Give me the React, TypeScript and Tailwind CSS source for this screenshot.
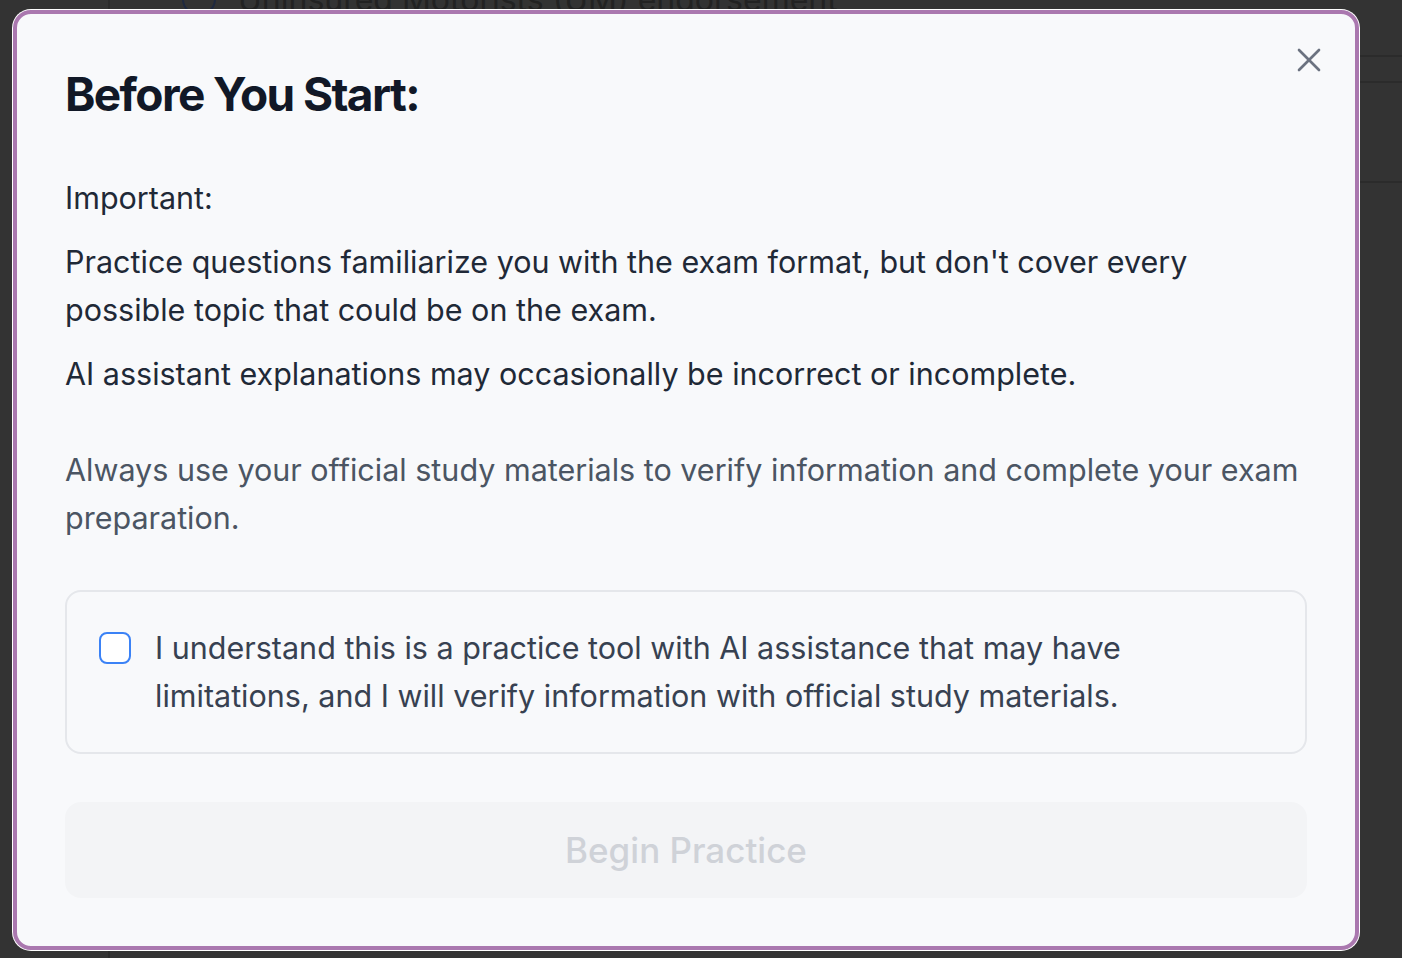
import { X } from 'lucide-react';

function BackgroundPage() {
  return (
    <div className="flex h-full w-full bg-[#333333]">
      <div className="w-[110px] shrink-0 border-r-2 border-[#2b2b2b]" />
      <div className="flex flex-1 flex-col">
        <div className="-mt-[24px] flex h-[81px] items-start border-b-2 border-[#2b2b2b] pl-[72px]">
          <div className="mt-[6px] h-[34px] w-[34px] rounded-full border-2 border-[#1f2940]" />
          <span className="ml-[22px] text-[32px] leading-[48px] text-[#222222]">
            Uninsured Motorists (UM) endorsement
          </span>
        </div>
        <div className="h-[26px] border-b-2 border-[#2b2b2b]" />
        <div className="h-[100px] border-b-2 border-[#2b2b2b]" />
        <div className="flex-1" />
      </div>
    </div>
  );
}

function AcknowledgeBox() {
  return (
    <label className="flex items-start gap-6 rounded-2xl border-2 border-[#e5e7eb] p-8">
      <span className="mt-2 h-8 w-8 shrink-0 rounded-lg border-2 border-[#3b82f6] bg-white" />
      <span className="text-[30.5px] leading-[48px] text-[#374151]">
        I understand this is a practice tool with AI assistance that may have limitations, and I will verify
        information with official study materials.
      </span>
    </label>
  );
}

export default function App() {
  return (
    <div
      className="relative h-[958px] w-full overflow-hidden"
      style={{ fontFamily: 'Inter, "Noto Sans", sans-serif' }}
    >
      <BackgroundPage />

      <div className="absolute left-[13px] top-[10px] w-[1346px] rounded-[18px] border-4 border-[#aa78af] bg-[#f8f9fb] p-12 ring-1 ring-white">
        <button className="absolute right-[26px] top-[26px] text-[#6b7280]">
          <X size={40} strokeWidth={1.6} />
        </button>

        <h2 className="text-[46px] font-bold leading-[64px] tracking-[-0.035em] text-[#111827]">
          Before You Start:
        </h2>

        <div className="mt-12 flex flex-col gap-4 text-[30.5px] leading-[48px] text-[#1f2937]">
          <p>Important:</p>
          <p>
            Practice questions familiarize you with the exam format, but don't cover every possible topic that
            could be on the exam.
          </p>
          <p>AI assistant explanations may occasionally be incorrect or incomplete.</p>
        </div>

        <p className="mt-12 text-[30.5px] leading-[48px] text-[#4b5563]">
          Always use your official study materials to verify information and complete your exam preparation.
        </p>

        <div className="mt-12">
          <AcknowledgeBox />
        </div>

        <button
          disabled
          className="mt-12 flex h-24 w-full items-center justify-center rounded-2xl bg-[#f3f4f6] text-[35px] font-medium text-[#cfd2d8]"
        >
          Begin Practice
        </button>
      </div>
    </div>
  );
}
